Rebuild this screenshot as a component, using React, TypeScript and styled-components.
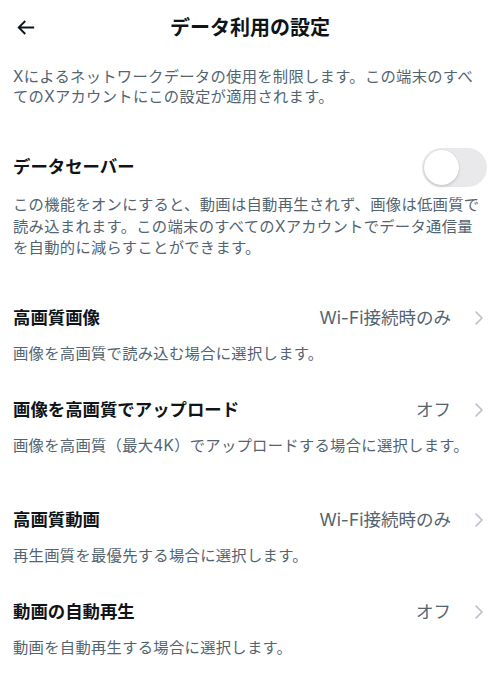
import { createGlobalStyle, styled } from 'styled-components';

const GlobalStyle = createGlobalStyle`
  html, body {
    margin: 0;
    padding: 0;
    background: #ffffff;
  }
  body {
    font-family: Inter, "Noto Sans CJK JP", "Noto Sans", sans-serif;
    color: #0f1419;
  }
`;

type Item = {
  title: string;
  value: string;
  desc: string;
};

const groups: Item[][] = [
  [
    {
      title: '高画質画像',
      value: 'Wi-Fi接続時のみ',
      desc: '画像を高画質で読み込む場合に選択します。',
    },
    {
      title: '画像を高画質でアップロード',
      value: 'オフ',
      desc: '画像を高画質（最大4K）でアップロードする場合に選択します。',
    },
  ],
  [
    {
      title: '高画質動画',
      value: 'Wi-Fi接続時のみ',
      desc: '再生画質を最優先する場合に選択します。',
    },
    {
      title: '動画の自動再生',
      value: 'オフ',
      desc: '動画を自動再生する場合に選択します。',
    },
  ],
];

export default function App() {
  return (
    <>
      <GlobalStyle />
      <Page>
        <Header>
          <BackButton aria-label="戻る">
            <svg width="23" height="23" viewBox="0 0 24 24">
              <path
                fill="#0f1419"
                d="M7.414 13l5.043 5.04-1.414 1.42L3.586 12l7.457-7.46 1.414 1.42L7.414 11H21v2H7.414z"
              />
            </svg>
          </BackButton>
          <Title>データ利用の設定</Title>
        </Header>

        <Intro>
          {'Xによるネットワークデータの使用を制限します。この端末のすべ\nてのXアカウントにこの設定が適用されます。'}
        </Intro>

        <SaverBlock>
          <SaverRow>
            <RowTitle>データセーバー</RowTitle>
            <Toggle>
              <Knob />
            </Toggle>
          </SaverRow>
          <SaverDesc>
            {'この機能をオンにすると、動画は自動再生されず、画像は低画質で\n読み込まれます。この端末のすべてのXアカウントでデータ通信量\nを自動的に減らすことができます。'}
          </SaverDesc>
        </SaverBlock>

        {groups.map((group, gi) => (
          <Group key={gi}>
            {group.map((item) => (
              <Setting key={item.title}>
                <SettingRow>
                  <RowTitle>{item.title}</RowTitle>
                  <ValueWrap>
                    <Value>{item.value}</Value>
                    <svg width="10" height="16" viewBox="0 0 10 16">
                      <polyline
                        points="2,2 8,8 2,14"
                        fill="none"
                        stroke="#b4bfc8"
                        strokeWidth="1.6"
                        strokeLinecap="round"
                        strokeLinejoin="round"
                      />
                    </svg>
                  </ValueWrap>
                </SettingRow>
                <Desc>{item.desc}</Desc>
              </Setting>
            ))}
          </Group>
        ))}
      </Page>
    </>
  );
}

const Page = styled.div`
  width: 500px;
  display: flex;
  flex-direction: column;
  padding: 0 13px;
  box-sizing: border-box;
`;

const Header = styled.div`
  height: 55px;
  position: relative;
  display: flex;
  align-items: center;
  justify-content: center;
`;

const BackButton = styled.button`
  position: absolute;
  left: 1px;
  top: 16px;
  border: none;
  background: none;
  padding: 0;
  display: flex;
  cursor: pointer;
`;

const Title = styled.h1`
  margin: 0;
  font-size: 20px;
  font-weight: 700;
  line-height: 24px;
  color: #0f1419;
`;

const Intro = styled.p`
  margin: 12px 0 0;
  font-size: 15.3px;
  line-height: 20px;
  letter-spacing: 0.3px;
  color: #536471;
  white-space: pre-line;
`;

const SaverBlock = styled.div`
  margin-top: 40px;
  display: flex;
  flex-direction: column;
`;

const SaverRow = styled.div`
  height: 40px;
  display: flex;
  align-items: center;
  justify-content: space-between;
`;

const RowTitle = styled.div`
  font-size: 17.4px;
  font-weight: 700;
  line-height: 24px;
  color: #0f1419;
`;

const Toggle = styled.div`
  width: 65px;
  height: 39px;
  border-radius: 20px;
  background: #e9e9eb;
  display: flex;
  align-items: center;
  padding: 2px;
  box-sizing: border-box;
`;

const Knob = styled.div`
  width: 35px;
  height: 35px;
  border-radius: 50%;
  background: #ffffff;
  box-shadow: 0 2px 3px rgba(0, 0, 0, 0.12), 0 0 1px rgba(0, 0, 0, 0.18);
`;

const SaverDesc = styled.p`
  margin: 7px 0 0;
  font-size: 15.3px;
  line-height: 21.5px;
  letter-spacing: 0.3px;
  color: #536471;
  white-space: pre-line;
`;

const Group = styled.div`
  margin-top: 47px;
  display: flex;
  flex-direction: column;
  gap: 34px;
  & + & {
    margin-top: 52px;
  }
`;

const Setting = styled.div`
  display: flex;
  flex-direction: column;
  gap: 13px;
`;

const SettingRow = styled.div`
  height: 24px;
  display: flex;
  align-items: center;
  justify-content: space-between;
`;

const ValueWrap = styled.div`
  display: flex;
  align-items: center;
  gap: 23px;
  padding-right: 3px;
`;

const Value = styled.span`
  font-size: 17.5px;
  line-height: 24px;
  color: #536471;
`;

const Desc = styled.p`
  margin: 0;
  font-size: 15.3px;
  line-height: 21px;
  letter-spacing: 0.3px;
  color: #536471;
`;
